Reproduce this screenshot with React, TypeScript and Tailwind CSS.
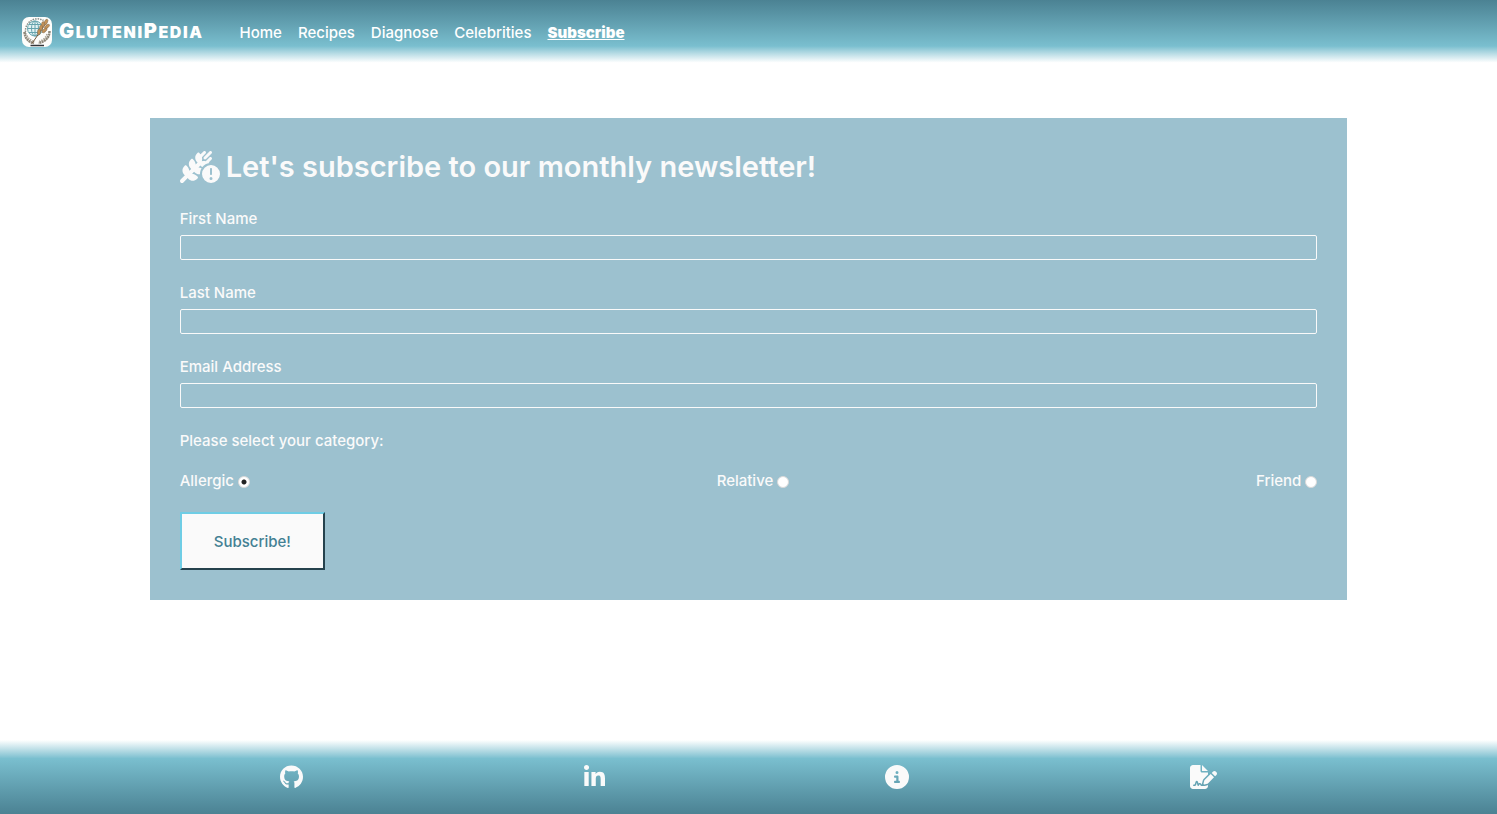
import React from "react";
import {
  FaCircleInfo,
  FaFileSignature,
  FaGithub,
  FaLinkedinIn,
  FaWheatAwnCircleExclamation,
} from "react-icons/fa6";

const links = ["Home", "Recipes", "Diagnose", "Celebrities"];

const fields = [
  { id: "first-name", label: "First Name", type: "text" },
  { id: "last-name", label: "Last Name", type: "text" },
  { id: "email", label: "Email Address", type: "email" },
];

const categories = ["Allergic", "Relative", "Friend"];

const social = [
  { label: "GitHub", Icon: FaGithub, size: "h-6 w-[23px]" },
  { label: "LinkedIn", Icon: FaLinkedinIn, size: "h-6 w-[21px]" },
  { label: "About", Icon: FaCircleInfo, size: "h-6 w-6" },
  { label: "Terms", Icon: FaFileSignature, size: "h-6 w-[27px]" },
];

function Logo() {
  return (
    <svg viewBox="0 0 60 60" className="size-[30px]" aria-hidden="true">
      <rect width="60" height="60" rx="14" fill="#fdfdfb" />
      <path d="M8 35A24 24 0 0 1 43 7" fill="none" stroke="#8b8f8a" strokeWidth="3" strokeDasharray="3 2" />
      <circle cx="26" cy="23" r="15" fill="#e4f3f4" stroke="#66a4ad" strokeWidth="2" />
      <g fill="none" stroke="#66a4ad" strokeWidth="2">
        <ellipse cx="26" cy="23" rx="7" ry="15" />
        <path d="M26 8v30M11 23h30M14 15h24M14 31h24" />
      </g>
      <path d="M5 30c1 13 8 20 19 22M55 28c0 14-9 21-22 24" fill="none" stroke="#8d8779" strokeWidth="5" strokeDasharray="4 1" />
      <path d="M10 37c3 7 8 10 16 12M50 34c-2 7-7 12-15 14" fill="none" stroke="#aaa497" strokeWidth="3" strokeDasharray="3 2" />
      <path d="M20 53 46 15" stroke="#73593c" strokeWidth="2" />
      <g fill="#c49358" stroke="#80664b" strokeWidth="1">
        <ellipse cx="48" cy="10" rx="3" ry="6" transform="rotate(25 48 10)" />
        <ellipse cx="42" cy="15" rx="3" ry="6" transform="rotate(5 42 15)" />
        <ellipse cx="50" cy="19" rx="3" ry="6" transform="rotate(50 50 19)" />
        <ellipse cx="38" cy="22" rx="3" ry="6" transform="rotate(5 38 22)" />
        <ellipse cx="45" cy="27" rx="3" ry="6" transform="rotate(50 45 27)" />
        <ellipse cx="34" cy="30" rx="3" ry="6" transform="rotate(5 34 30)" />
      </g>
      <path d="M17 57h27" stroke="#33363a" strokeWidth="3" />
    </svg>
  );
}

export default function App() {
  return (
    <div className="flex min-h-screen flex-col bg-white font-['Inter',sans-serif] text-[15px] leading-6 font-medium text-[#fafafa]">
      <header className="flex h-16 items-center bg-linear-to-b from-[#4b8293] via-[#7abfcf] via-72% to-white to-98% pl-[22px] text-white">
        <a href="#home" className="flex items-center gap-[7px]">
          <Logo />
          <span className="pb-0.5 text-[16px] font-black tracking-widest uppercase">
            <span className="text-[20px]">G</span>luteni<span className="text-[20px]">P</span>edia
          </span>
        </a>
        <nav className="ml-9 flex gap-4 pt-px">
          {links.map((link) => (
            <a key={link} href={`#${link.toLowerCase()}`}>
              {link}
            </a>
          ))}
          <a href="#subscribe" aria-current="page" className="font-black underline">
            Subscribe
          </a>
        </nav>
      </header>

      <main className="grow px-[10%] pt-[54px] pb-8">
        <form className="bg-[#9cc1cf] p-[30px]" onSubmit={(event) => event.preventDefault()}>
          <h1 className="flex items-center gap-[6px] text-[29px] leading-[38px] font-semibold">
            <FaWheatAwnCircleExclamation className="h-8 w-10" aria-hidden="true" />
            Let's subscribe to our monthly newsletter!
          </h1>
          <div className="mt-[21px] flex flex-col gap-[21px]">
            {fields.map(({ id, label, type }) => (
              <div key={id} className="flex flex-col gap-1">
                <label htmlFor={id}>{label}</label>
                <input id={id} type={type} className="h-[25px] rounded-[2px] border border-[#fafafa] px-1" />
              </div>
            ))}
          </div>
          <fieldset className="mt-[21px]">
            <legend>Please select your category:</legend>
            <div className="mt-4 flex justify-between">
              {categories.map((category) => (
                <label key={category} className="flex items-center gap-1">
                  {category}
                  <input
                    type="radio"
                    name="category"
                    value={category}
                    defaultChecked={category === "Allergic"}
                    className="mt-0.5 size-3 appearance-none rounded-full border border-[#d9d9d9] bg-white checked:bg-[radial-gradient(circle,#222_2px,white_3px)]"
                  />
                </label>
              ))}
            </div>
          </fieldset>
          <button
            type="submit"
            className="mt-[19px] border-2 border-t-[#6fcde5] border-r-[#25424d] border-b-[#25424d] border-l-[#6fcde5] bg-[#fafafa] px-8 pt-4 pb-[14px] text-[#438093]"
          >
            Subscribe!
          </button>
        </form>
      </main>

      <footer className="flex h-[74px] items-center justify-evenly bg-linear-to-t from-[#4b8293] via-[#7abfcf] via-75% to-white">
        {social.map(({ label, Icon, size }) => (
          <a key={label} href={`#${label.toLowerCase()}`} aria-label={label}>
            <Icon className={size} />
          </a>
        ))}
      </footer>
    </div>
  );
}
